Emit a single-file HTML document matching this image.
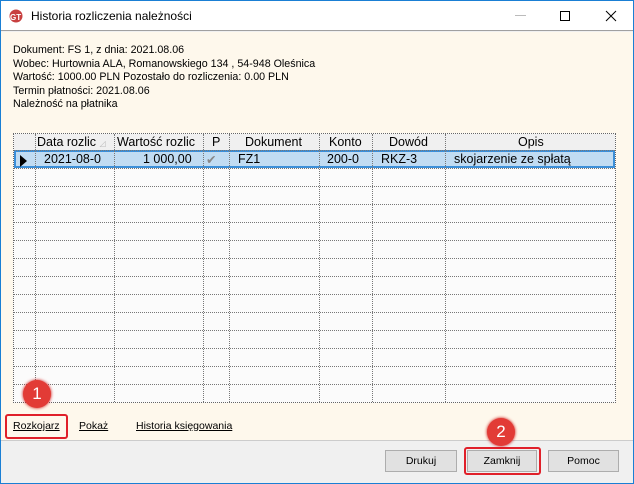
<!DOCTYPE html>
<html><head><meta charset="utf-8"><style>
*{margin:0;padding:0;box-sizing:border-box}
body{width:634px;height:484px;position:relative;overflow:hidden;font-family:"Liberation Sans",sans-serif;background:#fff}
.win{position:absolute;left:0;top:0;width:634px;height:484px;border:1px solid #1a7fd4;background:#f0f0f0}
.title{position:absolute;left:0;top:0;width:632px;height:30px;background:#fff;border-bottom:1px solid #a0a0a0}
.title span{position:absolute;left:30px;top:8px;font-size:12px;color:#000}
.body{position:absolute;left:0;top:31px;width:632px;height:409px;background:#fef8ec;border-bottom:1px solid #ccc}
.info{position:absolute;left:12px;top:43px;font-size:10.7px;line-height:13.5px;color:#000}
.grid{position:absolute;left:12px;top:132px;width:603px;height:270px;border:1px dotted #666;background:#fbfbfb}
.vl{position:absolute;top:0;bottom:0;border-left:1px dotted #777}
.hl{position:absolute;left:0;right:0;border-top:1px dotted #777}
.hd{position:absolute;top:1px;font-size:12px;text-align:center}
.sel{position:absolute;left:0;right:0;top:16px;height:18px;background:#c1dcf2;border:2px solid #3c8fd8}
.c{position:absolute;top:18px;font-size:12.5px}
.lnk{position:absolute;top:419px;font-size:10.5px;text-decoration:underline}
.btn{position:absolute;top:449px;height:22px;background:#e1e1e1;border:1px solid #adadad;font-size:10.5px;text-align:center;line-height:20px}
.red{position:absolute;border:2px solid #e0202a;border-radius:3px}
.circ{position:absolute;width:28px;height:28px;border-radius:50%;background:#e23b36;color:#fff;font-size:17px;text-align:center;line-height:28px;box-shadow:0 0 3px #c00}
</style></head><body>
<div class="win">
<div class="title">
<svg style="position:absolute;left:7px;top:8px" width="16" height="14"><circle cx="8" cy="7" r="6.5" fill="#c84040"/><text x="2" y="11" font-size="8" fill="#fff" font-family="Liberation Sans" font-weight="bold">GT</text></svg>
<span>Historia rozliczenia należności</span>
<div style="position:absolute;left:514px;top:14px;width:11px;border-top:1px solid #bbb"></div>
<div style="position:absolute;left:559px;top:10px;width:10px;height:10px;border:1px solid #000"></div>
<svg style="position:absolute;left:604px;top:9px" width="12" height="12"><path d="M1 1L11 11M11 1L1 11" stroke="#000" stroke-width="1"/></svg>
</div>
<div class="body"></div>
<div class="info">Dokument: FS 1, z dnia: 2021.08.06<br>Wobec: Hurtownia ALA, Romanowskiego 134 , 54-948 Oleśnica<br>Wartość: 1000.00 PLN Pozostało do rozliczenia: 0.00 PLN<br>Termin płatności: 2021.08.06<br>Należność na płatnika</div>
<div class="grid">
<div style="position:absolute;left:0;right:0;top:0;height:16px;background:#f0f0f0"></div>
<div class="sel"></div>
<div class="vl" style="left:21px"></div><div class="vl" style="left:100px"></div><div class="vl" style="left:189px"></div><div class="vl" style="left:215px"></div><div class="vl" style="left:305px"></div><div class="vl" style="left:358px"></div><div class="vl" style="left:431px"></div>
<div class="hl" style="top:16px"></div>
<div class="hl" style="top:34px"></div><div class="hl" style="top:52px"></div><div class="hl" style="top:70px"></div><div class="hl" style="top:88px"></div><div class="hl" style="top:106px"></div><div class="hl" style="top:124px"></div><div class="hl" style="top:142px"></div><div class="hl" style="top:160px"></div><div class="hl" style="top:178px"></div><div class="hl" style="top:196px"></div><div class="hl" style="top:214px"></div><div class="hl" style="top:232px"></div><div class="hl" style="top:250px"></div>
<div class="hd" style="left:23px;font-size:12.5px">Data rozlic <span style="color:#bbb;font-size:8px">◿</span></div>
<div class="hd" style="left:103px;font-size:12.5px">Wartość rozlic</div>
<div class="hd" style="left:198px;font-size:12.5px">P</div>
<div class="hd" style="left:231px;font-size:12.5px">Dokument</div>
<div class="hd" style="left:315px;font-size:12.5px">Konto</div>
<div class="hd" style="left:375px;font-size:12.5px">Dowód</div>
<div class="hd" style="left:504px;font-size:12.5px">Opis</div>
<svg style="position:absolute;left:6px;top:21px" width="8" height="12"><path d="M0 0L7 6L0 12Z" fill="#000"/></svg>
<div class="c" style="left:30px">2021-08-0</div>
<div class="c" style="left:129px">1 000,00</div>
<div class="c" style="left:192px;color:#888">✔</div>
<div class="c" style="left:224px">FZ1</div>
<div class="c" style="left:313px">200-0</div>
<div class="c" style="left:367px">RKZ-3</div>
<div class="c" style="left:440px">skojarzenie ze spłatą</div>
</div>
<div class="lnk" style="left:12px">Rozkojarz</div>
<div class="lnk" style="left:78px">Pokaż</div>
<div class="lnk" style="left:135px">Historia księgowania</div>
<div class="btn" style="left:384px;width:72px">Drukuj</div>
<div class="btn" style="left:466px;width:70px">Zamknij</div>
<div class="btn" style="left:547px;width:71px">Pomoc</div>
<div class="red" style="left:4px;top:413px;width:63px;height:25px"></div>
<div class="red" style="left:463px;top:446px;width:77px;height:28px"></div>
<div class="circ" style="left:22px;top:379px">1</div>
<div class="circ" style="left:486px;top:417px">2</div>
</div>
</body></html>
